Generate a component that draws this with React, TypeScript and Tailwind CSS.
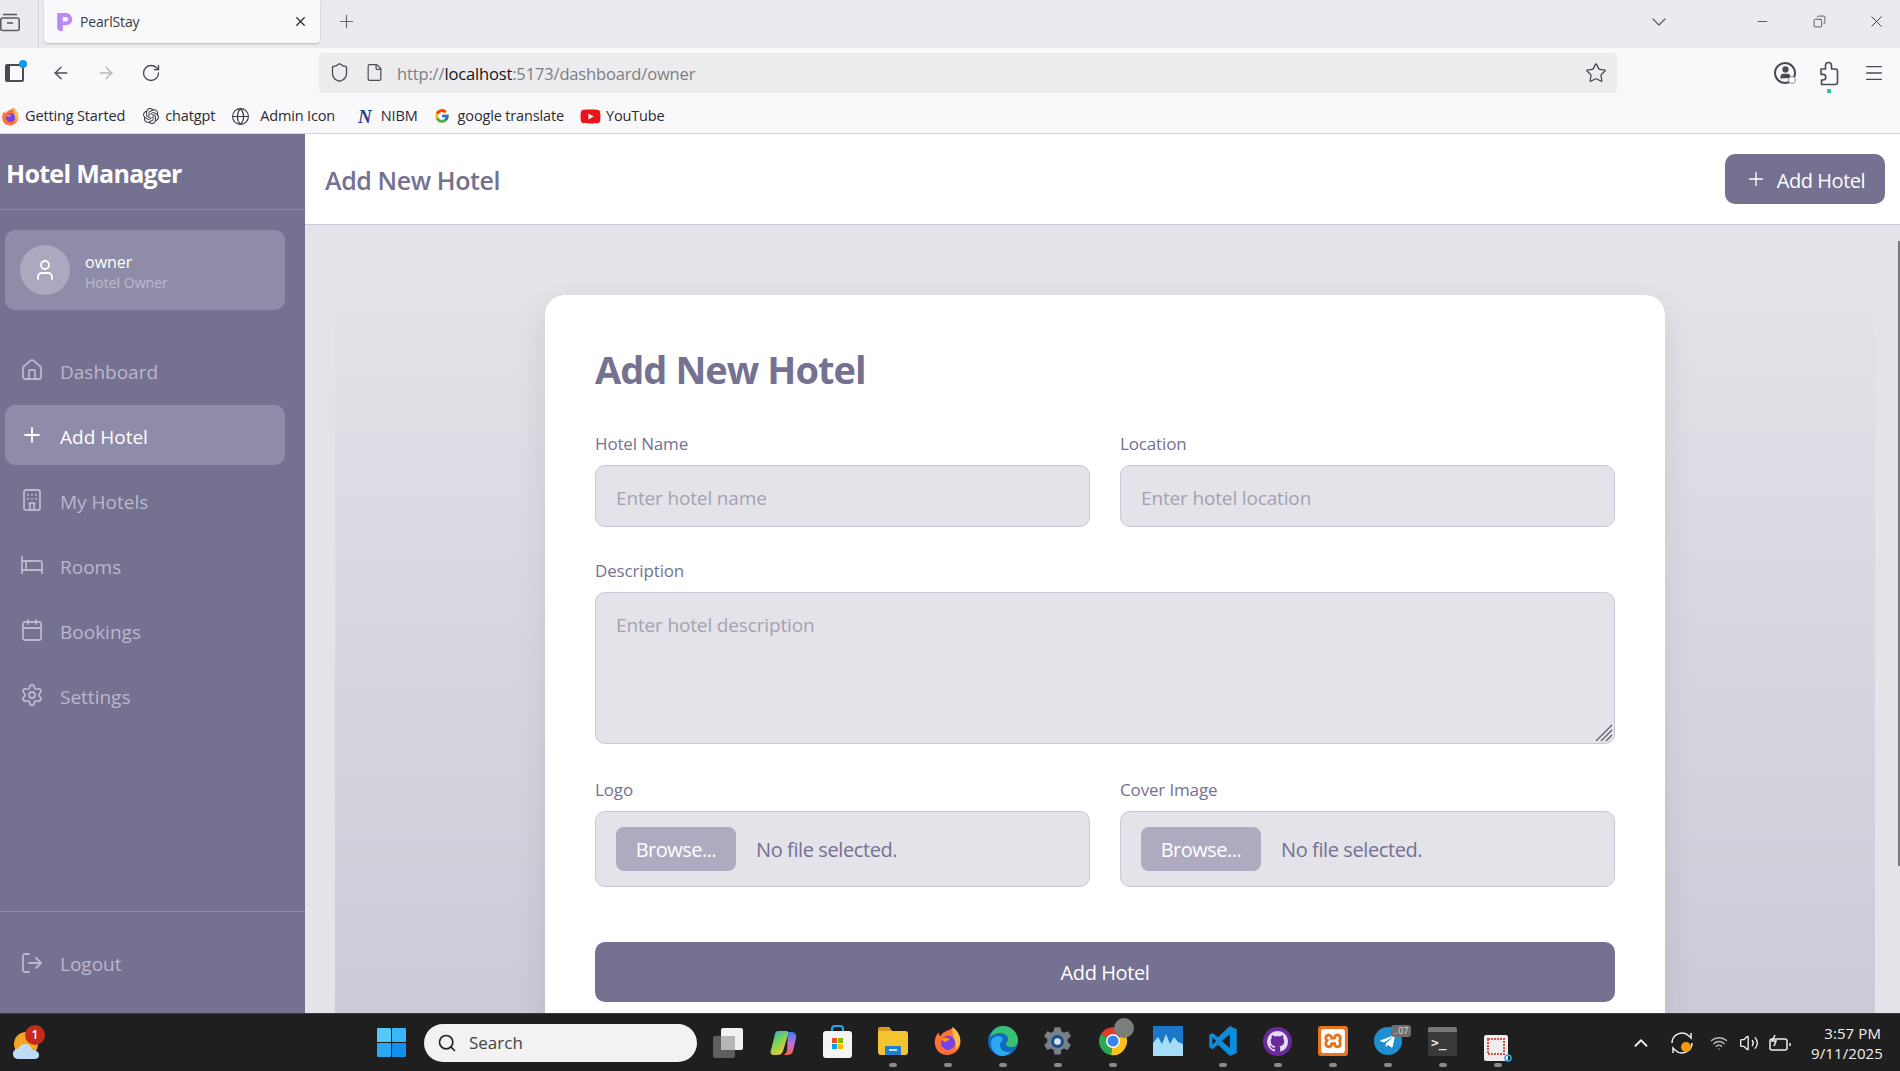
import type { ReactNode } from 'react';
import {
  ArrowLeft,
  ArrowRight,
  Bed,
  Calendar,
  ChevronDown,
  ChevronUp,
  Copy,
  File,
  Globe,
  Hotel,
  House,
  LogOut,
  Menu,
  Minus,
  Plus,
  RotateCw,
  Search,
  Settings,
  Shield,
  Star,
  User,
  Volume2,
  Wifi,
  X,
} from 'lucide-react';
import { FaTelegramPlane, FaYoutube } from 'react-icons/fa';
import { FcGoogle } from 'react-icons/fc';
import { SiOpenai, SiXampp } from 'react-icons/si';
import { VscGithubInverted } from 'react-icons/vsc';

const navItems = [
  { label: 'Dashboard', icon: House },
  { label: 'Add Hotel', icon: Plus, active: true },
  { label: 'My Hotels', icon: Hotel },
  { label: 'Rooms', icon: Bed },
  { label: 'Bookings', icon: Calendar },
  { label: 'Settings', icon: Settings },
];

function FirefoxLogo({ size }: Readonly<{ size: number }>) {
  return (
    <svg width={size} height={size} viewBox="0 0 32 32">
      <path d="M21 1c1 4 5 6 7 10 3 7 1 18-12 20C7 31 1 25 2 15c.3-3 2-6 4-8 0 2 1 3 2 4 1-3 4-5 7-6 3-1 5-2 6-4z" fill="#ff7139" />
      <path d="M21 1c4 3 9 9 8 16-1 4-3 7-6 9 2-4 2-8 0-12-1-3-3-6-2-13z" fill="#ffbd4f" />
      <circle cx="16" cy="18" r="7.5" fill="#7542e5" />
      <path d="M8 14c3-2 7-2 10 0l-5 3z" fill="#ff980e" />
    </svg>
  );
}

function BookmarkLink({ icon, label, className }: Readonly<{ icon: ReactNode; label: string; className: string }>) {
  return (
    <div className={`flex items-center ${className}`}>
      {icon}
      <span className="text-[14.5px] tracking-[-0.15px] text-[#2b2a33]">{label}</span>
    </div>
  );
}

function BrowserChrome() {
  return (
    <div className="shrink-0 font-['Open_Sans',sans-serif]">
      <div className="flex h-12 items-start bg-[#eaeaef]">
        <div className="flex h-12 w-[39px] items-center border-r border-[#cfcfd8] pb-1">
          <svg width="20" height="20" viewBox="0 0 20 20" fill="none" stroke="#5b5b66" strokeWidth="1.6">
            <path d="M3 2.5h14" />
            <rect x="0.8" y="6" width="18.4" height="12.5" rx="2" />
            <path d="M7 11h6" />
          </svg>
        </div>
        <div className="ml-[5px] flex h-[43px] w-[276px] items-center rounded-b-[4px] bg-[#f9f9fb] pl-3 pr-3 shadow-[0_1px_2px_rgba(0,0,0,0.2)]">
          <svg width="18" height="20" viewBox="0 0 16 18" fill="#b98af2">
            <path d="M1 1h8a5.5 5.5 0 0 1 0 11H6v5H3l-2-2zM6 4.5v4h3a2 2 0 0 0 0-4z" fillRule="evenodd" />
          </svg>
          <span className="ml-[6px] flex-1 text-[14px] tracking-[-0.15px] text-[#3b3a44]">PearlStay</span>
          <X size={15} className="text-[#2b2a33]" />
        </div>
        <div className="ml-4 flex h-[43px] items-center">
          <Plus size={21} strokeWidth={1.4} className="text-[#6b6b75]" />
        </div>
        <div className="ml-auto flex h-[43px] items-center pr-3">
          <ChevronDown size={24} strokeWidth={1.2} className="text-[#5b5b66]" />
          <div className="ml-[79px] flex w-6 justify-center">
            <Minus size={15} strokeWidth={1.2} className="text-[#2b2a33]" />
          </div>
          <div className="ml-[33px] flex w-6 justify-center">
            <Copy size={13} strokeWidth={1.3} className="-scale-x-100 text-[#2b2a33]" />
          </div>
          <div className="ml-[33px] flex w-6 justify-center">
            <X size={19} strokeWidth={1.1} className="text-[#2b2a33]" />
          </div>
        </div>
      </div>

      <div className="flex h-12 items-center bg-[#f9f9fb] pt-[1px]">
        <div className="relative ml-[5px] h-[18px] w-[19px] rounded-[2px] border-2 border-[#4a4a55] border-l-[5px]">
          <span className="absolute -right-[5px] -top-[6px] h-[8px] w-[8px] rounded-full bg-[#0a9dea]" />
        </div>
        <ArrowLeft size={20} strokeWidth={1.6} className="ml-[27px] text-[#4a4a55]" />
        <ArrowRight size={20} strokeWidth={1.6} className="ml-[25px] text-[#b5b5bd]" />
        <RotateCw size={20} strokeWidth={1.6} className="ml-[25px] text-[#4a4a55]" />
        <div className="ml-[158px] flex h-10 w-[1298px] items-center rounded-[4px] bg-[#ececee] pl-[10px] pr-[10px]">
          <Shield size={21} strokeWidth={1.5} className="text-[#4a4a55]" />
          <File size={19} strokeWidth={1.5} className="ml-[15px] text-[#4a4a55]" />
          <span className="ml-[13px] flex-1 pt-[4px] text-[16.5px] tracking-[-0.15px] text-[#7d7d85]">
            http://<span className="text-[#15141a]">localhost</span>:5173/dashboard/owner
          </span>
          <Star size={22} strokeWidth={1.4} className="text-[#4a4a55]" />
        </div>
        <div className="relative ml-[157px] flex h-[22px] w-[22px] items-center justify-center rounded-full border-2 border-[#4a4a55]">
          <User size={15} fill="#4a4a55" className="text-[#4a4a55]" />
          <span className="absolute -bottom-[2px] -right-[2px] h-[8px] w-[8px] rounded-full border border-[#8f8f9d] bg-white" />
        </div>
        <div className="relative ml-[22px]">
          <svg width="22" height="26" viewBox="0 0 22 26" fill="none" stroke="#4a4a55" strokeWidth="1.6" strokeLinejoin="round">
            <path d="M3 9h4.500V5.500a3 3 0 0 1 6 0V9h4c1 0 2 1 2 2v11.500c0 1-1 2-2 2H3.500v-4.500H5a2.800 2.800 0 0 0 0-5.600H3z" />
          </svg>
          <span className="absolute -bottom-[7px] left-[9px] h-[4px] w-[4px] bg-[#2ec4a5]" />
        </div>
        <Menu size={22} strokeWidth={1.4} className="ml-[23px] text-[#4a4a55]" />
      </div>

      <div className="flex h-[38px] items-center border-b border-[#d4d4da] bg-[#f9f9fb] pt-[3px]">
        <BookmarkLink
          className="ml-[1px] gap-[5px]"
          icon={<FirefoxLogo size={19} />}
          label="Getting Started"
        />
        <BookmarkLink
          className="ml-[18px] gap-[6px]"
          icon={<SiOpenai size={16} className="text-[#3b3a44]" />}
          label="chatgpt"
        />
        <BookmarkLink
          className="ml-[16px] gap-[10px]"
          icon={<Globe size={19} strokeWidth={1.4} className="text-[#3b3a44]" />}
          label="Admin Icon"
        />
        <BookmarkLink
          className="ml-[23px] gap-[9px]"
          icon={<span className="font-['Liberation_Serif',serif] text-[19px] font-bold italic leading-none text-[#2a3c8f]">N</span>}
          label="NIBM"
        />
        <BookmarkLink
          className="ml-[16px] gap-[8px]"
          icon={<FcGoogle size={16} />}
          label="google translate"
        />
        <BookmarkLink
          className="ml-[16px] gap-[5px]"
          icon={<FaYoutube size={21} className="text-[#e8151b]" />}
          label="YouTube"
        />
      </div>
    </div>
  );
}

function Sidebar() {
  return (
    <aside className="flex w-[305px] shrink-0 flex-col bg-[#747191]">
      <div className="flex h-[76px] shrink-0 items-center border-b border-[#8f8ca9] pl-[6px] pt-[4px]">
        <h1 className="text-[25px] font-bold tracking-[-0.7px] text-white">Hotel Manager</h1>
      </div>
      <div className="ml-[5px] mt-5 flex h-20 w-[280px] shrink-0 items-center gap-[15px] rounded-[10px] bg-[#8f8ca9] pl-[15px]">
        <div className="flex h-[50px] w-[50px] items-center justify-center rounded-full bg-[#aba9bf]">
          <User size={24} strokeWidth={1.8} className="text-white" />
        </div>
        <div className="pt-[4px]">
          <div className="text-[16px] leading-[22px] text-white">owner</div>
          <div className="text-[14px] leading-[20px] text-[#bdbbcf]">Hotel Owner</div>
        </div>
      </div>
      <nav className="ml-[5px] mt-[30px] flex w-[280px] flex-col gap-[5px]">
        {navItems.map((item) => (
          <div
            key={item.label}
            className={`flex h-[60px] items-center gap-4 rounded-[10px] pl-[15px] text-[19px] ${
              item.active ? 'bg-[#8f8ca9] text-white' : 'text-[#bab8cc]'
            }`}
          >
            <item.icon size={24} strokeWidth={1.8} />
            <span className="pt-[4px]">{item.label}</span>
          </div>
        ))}
      </nav>
      <div className="mt-auto flex h-[102px] items-center gap-4 border-t border-[#8f8ca9] pl-5 text-[19px] text-[#bab8cc]">
        <LogOut size={24} strokeWidth={1.8} />
        <span className="pt-[4px]">Logout</span>
      </div>
    </aside>
  );
}

function Field({ label, children }: Readonly<{ label: string; children: ReactNode }>) {
  return (
    <label className="block">
      <span className="mb-2 block text-[17px] leading-[26px] tracking-[-0.15px] text-[#747191]">{label}</span>
      {children}
    </label>
  );
}

function FilePicker() {
  return (
    <div className="flex h-[76px] items-center gap-5 rounded-[10px] border border-[#c9c8d6] bg-[#e3e3e9] pl-5">
      <button type="button" className="h-11 w-[120px] rounded-lg bg-[#aeabc0] pt-[2px] text-[20px] tracking-[-0.5px] text-white">
        Browse...
      </button>
      <span className="pt-[2px] text-[20px] tracking-[-0.4px] text-[#747191]">No file selected.</span>
    </div>
  );
}

const inputClass =
  'w-full rounded-[10px] border border-[#c9c8d6] bg-[#e3e3e9] px-5 text-[19px] tracking-[-0.15px] text-[#747191] outline-none placeholder:text-[#a3a2b2]';

function AddHotelForm() {
  return (
    <section className="mx-auto h-[800px] w-[1120px] rounded-[20px] bg-white px-[50px] pt-[50px] shadow-[0_12px_32px_rgba(0,0,0,0.09)]">
      <h2 className="pb-[2px] text-[38px] font-bold leading-[48px] tracking-[-0.95px] text-[#747191]">Add New Hotel</h2>
      <form className="mt-9">
        <div className="grid grid-cols-2 gap-[30px]">
          <Field label="Hotel Name">
            <input className={`${inputClass} h-[62px] pt-[3px]`} placeholder="Enter hotel name" />
          </Field>
          <Field label="Location">
            <input className={`${inputClass} h-[62px] pt-[3px]`} placeholder="Enter hotel location" />
          </Field>
        </div>
        <div className="relative mt-[31px]">
          <Field label="Description">
            <textarea className={`${inputClass} block h-[152px] resize-none pt-[18px]`} placeholder="Enter hotel description" />
          </Field>
          <svg className="absolute bottom-[2px] right-[2px]" width="18" height="18" viewBox="0 0 18 18" stroke="#5b5b66" strokeWidth="1.1">
            <path d="M1 17 17 1M6 17 17 6M11 17l6-6" />
          </svg>
        </div>
        <div className="mt-[33px] grid grid-cols-2 gap-[30px]">
          <Field label="Logo">
            <FilePicker />
          </Field>
          <Field label="Cover Image">
            <FilePicker />
          </Field>
        </div>
        <button type="button" className="mt-[55px] h-[60px] w-full rounded-[10px] bg-[#747191] pt-[2px] text-[20px] tracking-[-0.4px] text-white">
          Add Hotel
        </button>
      </form>
    </section>
  );
}

function Dashboard() {
  return (
    <div className="flex min-h-0 flex-1 font-['Open_Sans',sans-serif]">
      <Sidebar />
      <div className="flex min-w-0 flex-1 flex-col">
        <header className="flex h-[91px] shrink-0 items-center justify-between border-b border-[#c9c8d6] bg-white pl-5 pr-[15px]">
          <h2 className="pt-[3px] text-[25px] font-semibold tracking-[-0.4px] text-[#747191]">Add New Hotel</h2>
          <button type="button" className="flex h-[50px] w-40 items-center justify-center gap-[10px] rounded-[10px] bg-[#747191] text-[20px] tracking-[-0.45px] text-white">
            <Plus size={22} strokeWidth={1.5} />
            <span className="pt-[3px]">Add Hotel</span>
          </button>
        </header>
        <main className="relative min-h-0 flex-1 overflow-hidden bg-[#e3e3e9] pl-[30px] pr-[25px] pt-[42px]">
          <div className="h-full bg-gradient-to-b from-[#e3e3e9] to-[#cbcbd8] pt-[28px]">
            <AddHotelForm />
          </div>
          <div className="absolute right-0 top-[16px] h-[625px] w-[2px] bg-[#77777f]" />
        </main>
      </div>
    </div>
  );
}

function TaskIcon({ children, running = true }: Readonly<{ children: ReactNode; running?: boolean }>) {
  return (
    <div className="relative flex h-[57px] w-[55px] items-center justify-center pb-[3px]">
      {children}
      {running ? <span className="absolute bottom-[4px] left-[24px] h-[4px] w-[8px] rounded-full bg-[#8a8a8a]" /> : null}
    </div>
  );
}

function Taskbar() {
  return (
    <footer className="flex h-[58px] shrink-0 items-center border-t border-[#3a3a3a] bg-[#1f1f1f] font-['Open_Sans',sans-serif]">
      <div className="relative ml-[13px] h-9 w-7">
        <svg width="28" height="36" viewBox="0 0 28 36" className="absolute left-0 top-0">
          <circle cx="13" cy="19" r="12" fill="#f5a623" />
          <path d="M6 34c-4 0-6-2-6-5 0-3 2-5 5-5 1-3 4-5 7-5 4 0 7 3 7 6 4 0 7 2 7 5s-2 4-5 4z" fill="#bcdcf7" />
        </svg>
        <span className="absolute -right-[4px] top-0 flex h-5 w-5 items-center justify-center rounded-full bg-[#c42b1c] text-[12px] font-semibold text-white">1</span>
      </div>
      <svg width="29" height="29" viewBox="0 0 29 29" className="ml-[336px]">
        <rect width="14" height="14" rx="1" fill="#57c8f7" />
        <rect x="15" width="14" height="14" rx="1" fill="#3ab8f5" />
        <rect y="15" width="14" height="14" rx="1" fill="#2aa8f2" />
        <rect x="15" y="15" width="14" height="14" rx="1" fill="#1390ee" />
      </svg>
      <div className="ml-[18px] flex h-[38px] w-[273px] items-center rounded-full bg-[#f2f2f2] pl-[13px]">
        <Search size={20} strokeWidth={2} className="text-[#222]" />
        <span className="ml-[12px] text-[17px] text-[#444]">Search</span>
      </div>
      <svg width="30" height="30" viewBox="0 0 30 30" className="ml-[16px]">
        <rect x="8" y="0" width="22" height="22" rx="2" fill="#f2f2f2" />
        <rect x="0" y="8" width="22" height="22" rx="2" fill="#6b6b6b" fillOpacity="0.85" />
        <rect x="8" y="8" width="14" height="14" fill="#b5b5b5" />
      </svg>
      <svg width="28" height="28" viewBox="0 0 28 28" className="ml-[26px]">
        <defs>
          <linearGradient id="copilot" x1="0" y1="0" x2="0.6" y2="1">
            <stop offset="0" stopColor="#2fa8f0" />
            <stop offset="0.5" stopColor="#7bd34f" />
            <stop offset="1" stopColor="#f6c63d" />
          </linearGradient>
          <linearGradient id="copilot2" x1="0" y1="0" x2="0" y2="1">
            <stop offset="0" stopColor="#3b7cf0" />
            <stop offset="0.5" stopColor="#c86be0" />
            <stop offset="1" stopColor="#f0683c" />
          </linearGradient>
        </defs>
        <path d="M9 2h8c2 0 3 1 2 4l-5 16c-1 3-3 4-6 4H5c-3 0-4-2-3-5L6 5c.5-2 1.500-3 3-3z" fill="url(#copilot)" />
        <path d="M19 3h4c3 0 5 3 4 6l-3 13c-1 3-3 4-6 4h-5c3 0 4-2 5-4z" fill="url(#copilot2)" />
      </svg>
      <div className="ml-[13px] flex items-center">
        <TaskIcon running={false}>
          <svg width="29" height="33" viewBox="0 0 29 33">
            <path d="M9 8V4c0-2 1-3 3-3h5c2 0 3 1 3 3v4" fill="none" stroke="#2aa8f2" strokeWidth="2" />
            <rect y="6" width="29" height="27" rx="3" fill="#f4f4f4" />
            <rect x="9" y="13" width="5" height="5" fill="#f25022" />
            <rect x="15" y="13" width="5" height="5" fill="#7fba00" />
            <rect x="9" y="19" width="5" height="5" fill="#00a4ef" />
            <rect x="15" y="19" width="5" height="5" fill="#ffb900" />
          </svg>
        </TaskIcon>
        <TaskIcon>
          <svg width="30" height="28" viewBox="0 0 30 28">
            <path d="M0 3c0-2 1-3 3-3h8l3 4h13c2 0 3 1 3 3v18c0 2-1 3-3 3H3c-2 0-3-1-3-3z" fill="#f4c430" />
            <path d="M0 3c0-2 1-3 3-3h8l3 4H0z" fill="#d99a1c" />
            <rect x="7" y="19" width="16" height="9" rx="1" fill="#1f7fd1" />
            <rect x="11" y="22" width="8" height="2" fill="#bfe0fb" />
          </svg>
        </TaskIcon>
        <TaskIcon>
          <FirefoxLogo size={30} />
        </TaskIcon>
        <TaskIcon>
          <svg width="30" height="30" viewBox="0 0 30 30">
            <circle cx="15" cy="15" r="15" fill="#0f6cbd" />
            <path d="M2 11C4 4 9 0 15 0c8 0 15 6 15 15 0 4-3 6-7 6-3 0-5-1-5-3 0-2 2-2 2-5 0-3-3-6-7-6-5 0-9 2-11 4z" fill="#38c172" />
            <path d="M12 19c0 4 3 7 8 7 2 0 3 0 4-1-3 3-6 5-10 5-6 0-11-6-11-13 0-3 2-7 7-7 4 0 5 3 5 4-2 1-3 3-3 5z" fill="#2aa8f2" />
          </svg>
        </TaskIcon>
        <TaskIcon>
          <svg width="31" height="31" viewBox="0 0 24 24">
            <path d="M9.700 1h4.600l.8 3.200 1.900 1 3-1.200 2.300 4-2.400 2.200v2.200l2.400 2.200-2.300 4-3-1.200-1.900 1-.8 3.600H9.700l-.8-3.600-1.900-1-3 1.200-2.300-4 2.400-2.200V10.200L1.700 8l2.300-4 3 1.200 1.900-1z" fill="#7a8088" />
            <circle cx="12" cy="12" r="5" fill="#16508e" />
            <circle cx="12" cy="12" r="2.600" fill="#dbe4ee" />
          </svg>
        </TaskIcon>
        <TaskIcon>
          <div className="relative h-[30px] w-[30px]">
            <svg width="30" height="30" viewBox="0 0 30 30">
              <path d="M15 15 3 8a14 14 0 0 1 24 0z" fill="#e33b2e" />
              <path d="M15 15 3 8a14 14 0 0 0 10 21z" fill="#2da94f" />
              <path d="M15 15 27 8a14 14 0 0 1-14 21z" fill="#fbc116" />
              <circle cx="15" cy="15" r="7" fill="#fff" />
              <circle cx="15" cy="15" r="5.500" fill="#3b82f0" />
            </svg>
            <span className="absolute -right-[6px] -top-[8px] h-5 w-5 rounded-full bg-[#7b7f7a]" />
          </div>
        </TaskIcon>
        <TaskIcon running={false}>
          <svg width="30" height="30" viewBox="0 0 30 30">
            <rect width="30" height="30" fill="#1b77c9" />
            <path d="M0 30V17l5-6 4 7 4-10 4 10 4-7 4 5 5 2v12z" fill="#a6ddf8" />
          </svg>
        </TaskIcon>
        <TaskIcon>
          <svg width="30" height="30" viewBox="0 0 24 24">
            <path d="M17.500 0 8 9 3.500 5.500 1 7v10l2.500 1.500L8 15l9.500 9 5.500-2.500v-19zM17.500 6.500v11L11 12zM3.500 9l3 3-3 3z" fill="#0d8ddb" fillRule="evenodd" />
          </svg>
        </TaskIcon>
        <TaskIcon>
          <div className="flex h-[29px] w-[29px] items-center justify-center rounded-full bg-[#6a2a9c]">
            <VscGithubInverted size={21} className="text-[#e6dcf0]" />
          </div>
        </TaskIcon>
        <TaskIcon>
          <div className="flex h-[30px] w-[30px] items-center justify-center rounded-[3px] bg-[#e8741f]">
            <SiXampp size={24} className="text-white" />
          </div>
        </TaskIcon>
        <TaskIcon>
          <div className="relative flex h-[28px] w-[28px] items-center justify-center rounded-full bg-[#1f8fd1]">
            <FaTelegramPlane size={17} className="text-white" />
            <span className="absolute -right-[9px] -top-[2px] rounded-[3px] bg-[#6f6f6f] px-[2px] text-[9px] leading-[12px] text-[#ddd]">..07</span>
          </div>
        </TaskIcon>
        <TaskIcon>
          <div className="flex h-[29px] w-[29px] flex-col overflow-hidden rounded-[2px] bg-[#3a3a3a]">
            <div className="h-[5px] bg-[#777]" />
            <span className="pl-[3px] font-['DejaVu_Sans_Mono',monospace] text-[13px] font-bold leading-[22px] text-[#e8e8e8]">&gt;_</span>
          </div>
        </TaskIcon>
        <TaskIcon>
          <svg width="30" height="30" viewBox="0 0 30 30" className="mt-[15px]">
            <rect x="1" y="1" width="24" height="26" rx="2" fill="#eee" />
            <rect x="5" y="5" width="16" height="15" fill="none" stroke="#d9534f" strokeWidth="2" strokeDasharray="2 1" />
            <circle cx="25" cy="24" r="3" fill="none" stroke="#2aa8f2" strokeWidth="1.500" />
          </svg>
        </TaskIcon>
      </div>
      <div className="ml-auto flex items-center pr-[19px] text-[#f0f0f0]">
        <ChevronUp size={22} strokeWidth={2} />
        <svg width="24" height="24" viewBox="0 0 24 24" fill="none" stroke="#eee" strokeWidth="1.500" className="ml-[18px]">
          <path d="M2 12A10 10 0 0 1 19 5l2 2V2M22 12a10 10 0 0 1-17 7l-2-2v5" />
          <circle cx="16" cy="16" r="5" fill="#f59a0e" stroke="none" />
        </svg>
        <Wifi size={18} strokeWidth={1.8} className="ml-[16px] text-[#bbb]" />
        <Volume2 size={20} strokeWidth={1.6} className="ml-[11px]" />
        <svg width="22" height="18" viewBox="0 0 22 18" fill="none" stroke="#eee" strokeWidth="1.500" className="ml-[10px]">
          <rect x="1" y="5" width="17" height="11" rx="2" />
          <path d="M21 9v3" />
          <path d="M6 1 3 7h4l-2 5" />
        </svg>
        <div className="ml-[20px] w-[70px] text-right text-[15px] leading-[20px] tracking-[0.1px]">
          <div>3:57 PM</div>
          <div>9/11/2025</div>
        </div>
      </div>
    </footer>
  );
}

export default function App() {
  return (
    <div className="flex h-[1071px] w-[1900px] flex-col overflow-hidden">
      <BrowserChrome />
      <Dashboard />
      <Taskbar />
    </div>
  );
}
